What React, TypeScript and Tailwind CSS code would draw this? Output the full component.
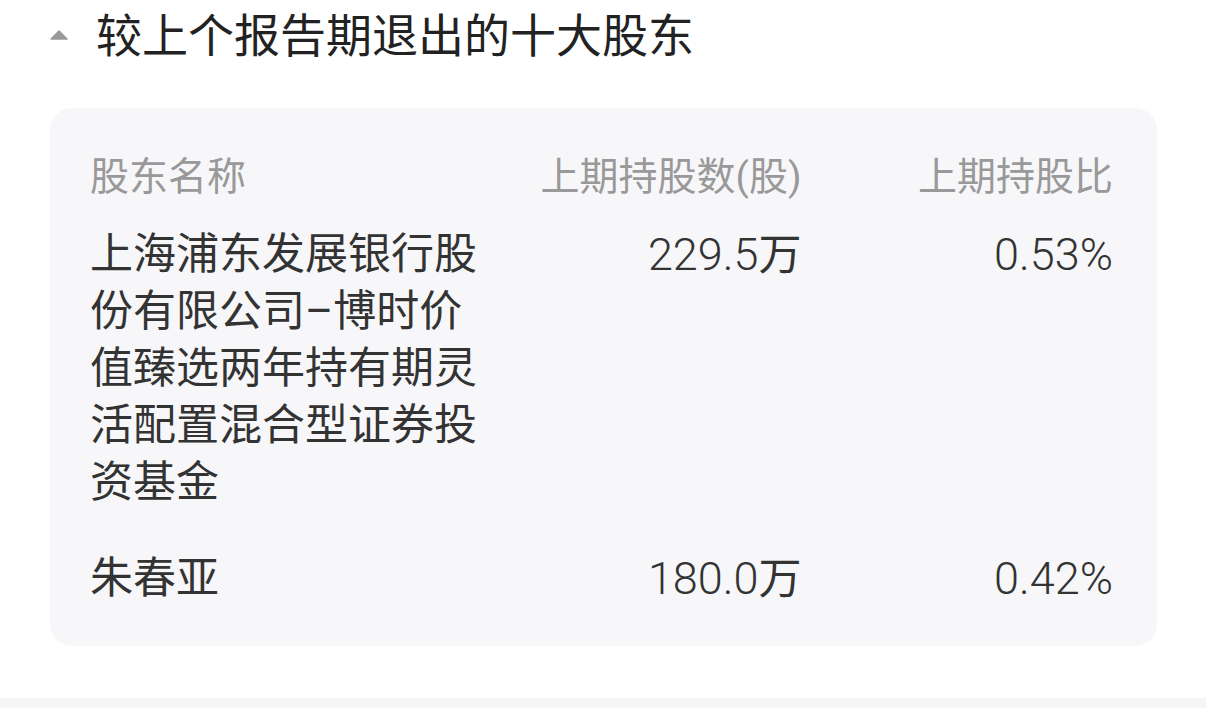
import React from 'react';

interface Holder {
  name: string;
  shares: string;
  ratio: string;
}

const holders: Holder[] = [
  {
    name: '上海浦东发展银行股份有限公司–博时价值臻选两年持有期灵活配置混合型证券投资基金',
    shares: '229.5',
    ratio: '0.53%',
  },
  { name: '朱春亚', shares: '180.0', ratio: '0.42%' },
];

const font = { fontFamily: 'Roboto, "Noto Sans CJK SC", sans-serif' };

const App: React.FC = () => {
  return (
    <div className="w-[1206px] h-[708px] bg-white flex flex-col" style={font}>
      {/* section title */}
      <div className="flex items-center h-[72px] pl-[50px]">
        <svg width="18" height="10" viewBox="0 0 18 10" className="mr-[28px] mt-[-2px]">
          <path d="M9 1 L17 9 L1 9 Z" fill="#999" stroke="#999" strokeWidth="1.5" strokeLinejoin="round" />
        </svg>
        <h2 className="text-[46px] leading-[56px] text-[#222]">较上个报告期退出的十大股东</h2>
      </div>

      <div className="mt-[36px] mx-[50px] w-[1107px] rounded-[22px] bg-[#f7f7f9] pl-[40px] pr-[44px]">
        <div className="grid grid-cols-[400px_1fr_1fr] pt-[41px] text-[39px] leading-[56px] text-[#999]">
          <div>股东名称</div>
          <div className="text-right">上期持股数(股)</div>
          <div className="text-right">上期持股比</div>
        </div>

        <div className="flex flex-col gap-[39px] pt-[21px] pb-[38px]">
          {holders.map((h) => (
            <div key={h.name} className="grid grid-cols-[400px_1fr_1fr] text-[43px] leading-[57px] text-[#333]">
              <div className="pr-[8px]">{h.name}</div>
              <div className="text-right">
                <span className="text-[45px] font-light">{h.shares}</span>
                <span>万</span>
              </div>
              <div className="text-right text-[45px] font-light">{h.ratio}</div>
            </div>
          ))}
        </div>
      </div>

      <div className="flex-1" />
      <div className="h-[10px] bg-[#f6f6f8]" />
    </div>
  );
};

export default App;
